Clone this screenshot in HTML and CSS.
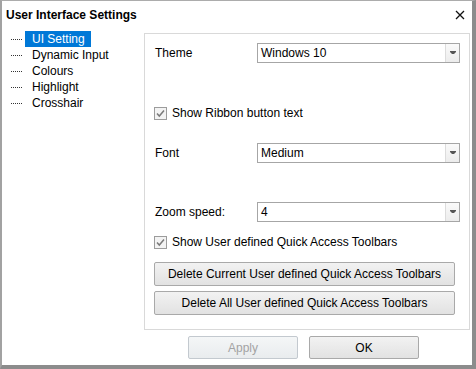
FILE: index.html
```html
<!DOCTYPE html>
<html lang="en">
<head>
    <meta charset="UTF-8">
    <title>User Interface Settings</title>
    <link rel="stylesheet" href="styles.css">
</head>
<body>
    <div class="window">
        <div class="titlebar">
            <span class="title">User Interface Settings</span>
            <svg class="close" width="10" height="10" viewBox="0 0 10 10">
                <path d="M1 1 L9 9 M9 1 L1 9" stroke="#111" stroke-width="1.3" fill="none"/>
            </svg>
        </div>

        <div class="main">
            <!-- Left tree -->
            <ul class="tree">
                <li><span class="branch"></span><span class="node selected">UI Setting</span></li>
                <li><span class="branch"></span><span class="node">Dynamic Input</span></li>
                <li><span class="branch"></span><span class="node">Colours</span></li>
                <li><span class="branch"></span><span class="node">Highlight</span></li>
                <li><span class="branch"></span><span class="node">Crosshair</span></li>
            </ul>

            <div class="content">
                <div class="panel">
                    <div class="field row-theme">
                        <span class="label">Theme</span>
                        <div class="combo">
                            <span class="combo-text">Windows 10</span>
                            <span class="combo-arrow"><svg width="6" height="4" viewBox="0 0 6 4"><path d="M0 0 H6 V1 L4 3 H2 L0 1 Z" fill="#555"/></svg></span>
                        </div>
                    </div>

                    <div class="check row-ribbon">
                        <svg class="box" width="13" height="13" viewBox="0 0 13 13">
                            <rect x="0.5" y="0.5" width="12" height="12" fill="#f3f3f3" stroke="#9c9c9c"/>
                            <path d="M3 6.5 L5.3 9 L10 3.5" stroke="#7a7a7a" stroke-width="1.5" fill="none"/>
                        </svg>
                        <span>Show Ribbon button text</span>
                    </div>

                    <div class="field row-font">
                        <span class="label">Font</span>
                        <div class="combo">
                            <span class="combo-text">Medium</span>
                            <span class="combo-arrow"><svg width="6" height="4" viewBox="0 0 6 4"><path d="M0 0 H6 V1 L4 3 H2 L0 1 Z" fill="#555"/></svg></span>
                        </div>
                    </div>

                    <div class="field row-zoom">
                        <span class="label">Zoom speed:</span>
                        <div class="combo">
                            <span class="combo-text">4</span>
                            <span class="combo-arrow"><svg width="6" height="4" viewBox="0 0 6 4"><path d="M0 0 H6 V1 L4 3 H2 L0 1 Z" fill="#555"/></svg></span>
                        </div>
                    </div>

                    <div class="check row-toolbars">
                        <svg class="box" width="13" height="13" viewBox="0 0 13 13">
                            <rect x="0.5" y="0.5" width="12" height="12" fill="#f3f3f3" stroke="#9c9c9c"/>
                            <path d="M3 6.5 L5.3 9 L10 3.5" stroke="#7a7a7a" stroke-width="1.5" fill="none"/>
                        </svg>
                        <span>Show User defined Quick Access Toolbars</span>
                    </div>

                    <button class="btn wide first">Delete Current User defined Quick Access Toolbars</button>
                    <button class="btn wide second">Delete All User defined Quick Access Toolbars</button>
                </div>

                <div class="footer">
                    <button class="btn small" disabled>Apply</button>
                    <button class="btn small">OK</button>
                </div>
            </div>
        </div>
    </div>
</body>
</html>
```

FILE: styles.css
```css
body {
    margin: 0;
    font-family: 'Liberation Sans', Arial, sans-serif;
    font-size: 12px;
    color: #000;
    background: #fff;
}

.window {
    width: 476px;
    height: 369px;
    box-sizing: border-box;
    border-top: 1px solid #acacac;
    border-left: 2px solid #a2a2a2;
    border-right: 4px solid #8c8c8c;
    border-bottom: 4px solid #8c8c8c;
    background: #fff;
    display: flex;
    flex-direction: column;
}

.titlebar {
    height: 25px;
    display: flex;
    align-items: center;
    justify-content: space-between;
    padding: 2px 7px 0 4px;
    box-sizing: border-box;
}

.title {
    font-weight: bold;
    font-size: 12px;
}

.main {
    flex: 1;
    display: flex;
}

/* Tree on the left */
.tree {
    list-style: none;
    margin: 0;
    padding: 5px 0 0 0;
    width: 142px;
}

.tree li {
    height: 16px;
    display: flex;
    align-items: center;
}

.branch {
    width: 11px;
    margin-left: 9px;
    margin-right: 3px;
    border-top: 1px dotted #333;
}

.node {
    height: 16px;
    line-height: 16px;
    padding: 0 6px 0 7px;
}

.node.selected {
    background: #0078d7;
    color: #fff;
}

/* Right side */
.content {
    width: 328px;
    display: flex;
    flex-direction: column;
}

.panel {
    margin-top: 7px;
    width: 326px;
    box-sizing: border-box;
    border: 1px solid #d9d9d9;
    padding: 9px 9px 14px 9px;
    display: flex;
    flex-direction: column;
}

.field {
    height: 20px;
    display: flex;
    align-items: center;
}

.label {
    width: 102px;
    padding-left: 1px;
}

.combo {
    width: 203px;
    height: 20px;
    box-sizing: border-box;
    border: 1px solid #a6a6a6;
    display: flex;
    background: #fff;
}

.combo-text {
    flex: 1;
    padding-left: 3px;
    line-height: 18px;
}

.combo-arrow {
    width: 13px;
    border-left: 1px solid #dcdcdc;
    background: linear-gradient(#fafafa, #ececec);
    display: flex;
    align-items: center;
    justify-content: center;
}

.check {
    height: 20px;
    display: flex;
    align-items: center;
    gap: 5px;
}

.row-ribbon {
    margin-top: 40px;
}

.row-font {
    margin-top: 20px;
}

.row-zoom {
    margin-top: 39px;
}

.row-toolbars {
    margin-top: 10px;
}

.btn {
    font-family: inherit;
    font-size: 12px;
    color: #000;
    height: 24px;
    padding: 0;
    border: 1px solid #a9a9a9;
    border-radius: 2px;
    background: linear-gradient(#f2f2f2, #e2e2e2);
}

.btn.wide {
    width: 301px;
}

.btn.first {
    margin-top: 10px;
}

.btn.second {
    margin-top: 5px;
}

.footer {
    margin-top: 6px;
    padding-left: 44px;
    display: flex;
    gap: 11px;
}

.btn.small {
    width: 110px;
    height: 23px;
}

.btn:disabled {
    color: #a3a3a3;
    border-color: #c3c9cf;
    background: linear-gradient(#f4f6f7, #e9ecee);
}
```
